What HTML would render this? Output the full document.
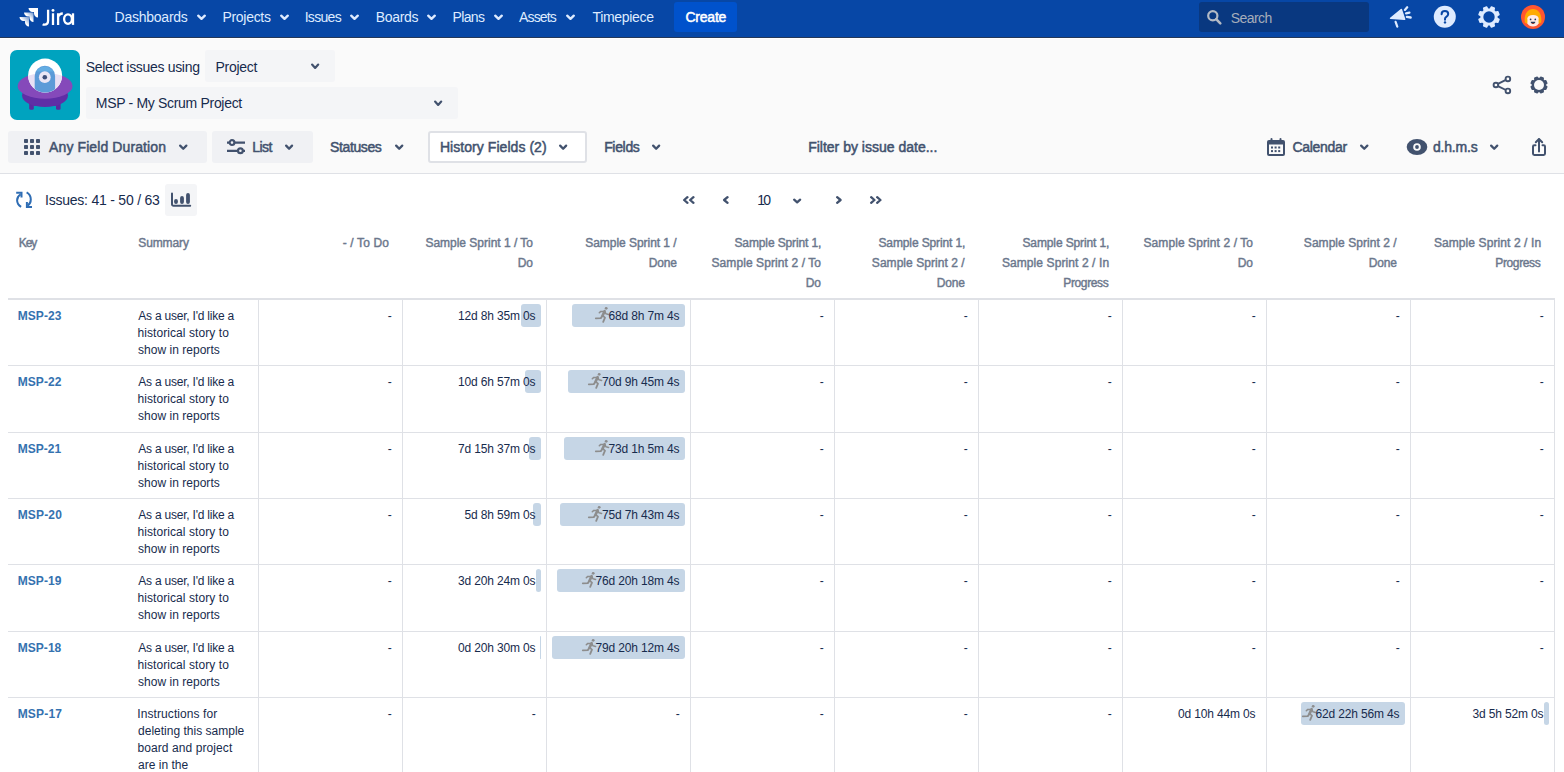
<!DOCTYPE html>
<html><head><meta charset="utf-8"><style>
*{box-sizing:border-box;margin:0;padding:0}
html,body{width:1564px;height:772px;overflow:hidden;background:#fff;font-family:"Liberation Sans", sans-serif;position:relative}
body>div,body>svg{position:absolute}
</style></head><body>
<div style="position:absolute;left:0;top:0;width:1564px;height:37px;background:#0747a6"></div>
<div style="position:absolute;left:0;top:37px;width:1564px;height:1px;background:#253858"></div>
<div style="position:absolute;left:0;top:38px;width:1564px;height:1px;background:#fff"></div>
<svg style="position:absolute;left:18px;top:7px" width="22" height="22" viewBox="0 0 22 22">
<defs><linearGradient id="jg" x1="1" y1="0" x2="0" y2="1"><stop offset="0" stop-color="#fff" stop-opacity=".4"/><stop offset=".5" stop-color="#fff"/></linearGradient></defs>
<path d="M10.5 1h9.5v9.5c-2.2 0-4-1.8-4-4V5h-1.5c-2.2 0-4-1.8-4-4z" fill="#fff"/>
<path d="M6 5.5h9.5V15c-2.2 0-4-1.8-4-4V9.5H10c-2.2 0-4-1.8-4-4z" fill="url(#jg)"/>
<path d="M1.5 10h9.5v9.5c-2.2 0-4-1.8-4-4V14H5.5c-2.2 0-4-1.8-4-4z" fill="url(#jg)"/>
</svg>
<svg style="position:absolute;left:40px;top:6px" width="38" height="22" viewBox="40 6 38 22" fill="none" stroke="#fff" stroke-width="2.3">
<path d="M48.1 9.7V20.6c0 2.7-1.6 4.1-3.6 4.1c-.7 0-1.3-.1-1.8-.4"/>
<path d="M53 13.3V24.9M58.1 13.3V24.9M58.1 17.2c.8-2.6 2.5-3.7 4.7-3.7"/>
<ellipse cx="68" cy="19.1" rx="3.9" ry="4.7"/><path d="M73 13.3V24.9"/>
<circle cx="53" cy="10.4" r="1.45" fill="#fff" stroke="none"/></svg>
<svg style="position:absolute;left:195.5px;top:12.5px" width="11" height="8.5" viewBox="-1 -1.5 11 8.5"><path d="M1.2 1.2L4.5 4.3L7.8 1.2" fill="none" stroke="#deebff" stroke-width="2.4" stroke-linecap="round" stroke-linejoin="round"/></svg>
<svg style="position:absolute;left:278.7px;top:12.5px" width="11" height="8.5" viewBox="-1 -1.5 11 8.5"><path d="M1.2 1.2L4.5 4.3L7.8 1.2" fill="none" stroke="#deebff" stroke-width="2.4" stroke-linecap="round" stroke-linejoin="round"/></svg>
<svg style="position:absolute;left:349.4px;top:12.5px" width="11" height="8.5" viewBox="-1 -1.5 11 8.5"><path d="M1.2 1.2L4.5 4.3L7.8 1.2" fill="none" stroke="#deebff" stroke-width="2.4" stroke-linecap="round" stroke-linejoin="round"/></svg>
<svg style="position:absolute;left:425.8px;top:12.5px" width="11" height="8.5" viewBox="-1 -1.5 11 8.5"><path d="M1.2 1.2L4.5 4.3L7.8 1.2" fill="none" stroke="#deebff" stroke-width="2.4" stroke-linecap="round" stroke-linejoin="round"/></svg>
<svg style="position:absolute;left:492.8px;top:12.5px" width="11" height="8.5" viewBox="-1 -1.5 11 8.5"><path d="M1.2 1.2L4.5 4.3L7.8 1.2" fill="none" stroke="#deebff" stroke-width="2.4" stroke-linecap="round" stroke-linejoin="round"/></svg>
<svg style="position:absolute;left:564.9px;top:12.5px" width="11" height="8.5" viewBox="-1 -1.5 11 8.5"><path d="M1.2 1.2L4.5 4.3L7.8 1.2" fill="none" stroke="#deebff" stroke-width="2.4" stroke-linecap="round" stroke-linejoin="round"/></svg>
<div style="position:absolute;left:674px;top:2px;width:63px;height:30px;background:#0052cc;border-radius:3px"></div>
<div style="position:absolute;left:1199px;top:2px;width:170px;height:30px;background:#093880;border-radius:3px"></div>
<svg style="position:absolute;left:1206px;top:9px" width="17" height="17" viewBox="0 0 17 17"><circle cx="6.8" cy="6.8" r="4.6" fill="none" stroke="#b3bac5" stroke-width="2.2"/><path d="M10.2 10.2L14.3 14.3" stroke="#b3bac5" stroke-width="2.6" stroke-linecap="round"/></svg>
<svg style="position:absolute;left:1385px;top:2px" width="30" height="30" viewBox="0 0 30 30">
<path d="M5.6 16.3L16.3 7.6L19.6 17.3Z" fill="#deebff" stroke="#deebff" stroke-width="1.6" stroke-linejoin="round"/>
<path d="M10.6 19.8L12.3 24.6" stroke="#deebff" stroke-width="2.2" stroke-linecap="round"/>
<path d="M19.9 7.9L22.2 5.3M21.1 11.3L24.4 10.6M21.9 14.9L25.7 15.5" stroke="#deebff" stroke-width="2.3" stroke-linecap="round"/>
</svg>
<svg style="position:absolute;left:1433px;top:5px" width="24" height="24" viewBox="0 0 24 24"><circle cx="11.8" cy="11.8" r="11" fill="#deebff"/>
<path d="M8.6 9.3c0-2 1.5-3.2 3.3-3.2s3.3 1.2 3.3 3c0 1.5-.9 2.2-1.9 2.8-.8.5-1.3 1-1.3 2v.8" fill="none" stroke="#0747a6" stroke-width="2" stroke-linecap="round"/>
<circle cx="12" cy="17.4" r="1.2" fill="#0747a6"/></svg>
<svg style="position:absolute;left:1477px;top:5px" width="24" height="24" viewBox="0 0 24 24"><path d="M19.92 13.14L22.01 14.43L20.79 17.36L18.40 16.79L16.79 18.40L17.36 20.79L14.43 22.01L13.14 19.92L10.86 19.92L9.57 22.01L6.64 20.79L7.21 18.40L5.60 16.79L3.21 17.36L1.99 14.43L4.08 13.14L4.08 10.86L1.99 9.57L3.21 6.64L5.60 7.21L7.21 5.60L6.64 3.21L9.57 1.99L10.86 4.08L13.14 4.08L14.43 1.99L17.36 3.21L16.79 5.60L18.40 7.21L20.79 6.64L22.01 9.57L19.92 10.86Z" fill="#deebff" stroke="#deebff" stroke-width="1.4" stroke-linejoin="round"/><circle cx="12" cy="12" r="5.7" fill="#0747a6"/></svg>
<svg style="position:absolute;left:1521px;top:5px" width="24" height="24" viewBox="0 0 24 24"><circle cx="12" cy="12" r="12" fill="#ff5630"/>
<path d="M3.8 17.5C2.8 9 6.5 3.9 12 3.9S21.2 9 20.2 17.5L17 19H7Z" fill="#ffab00"/>
<path d="M6.4 13.3c0-1.9 2.2-3 5.6-3.2c3.4.2 5.6 1.3 5.6 3.2V18.2c-1 2.2-3 3.3-5.6 3.3S7.4 20.4 6.4 18.2Z" fill="#ffebe6"/>
<circle cx="9.6" cy="14.4" r=".85" fill="#253858"/><circle cx="14.3" cy="14.4" r=".85" fill="#253858"/>
<path d="M9.6 16.8h4.8c-.3 1.4-1.2 2.1-2.4 2.1s-2.1-.7-2.4-2.1z" fill="#253858"/><path d="M10.6 18.2h2.8c-.4.5-.9.7-1.4.7s-1-.2-1.4-.7z" fill="#de350b"/>
</svg>
<div style="position:absolute;left:0;top:39px;width:1564px;height:134px;background:#fafafa"></div>
<div style="position:absolute;left:0;top:173px;width:1564px;height:1px;background:#dfe1e6"></div>
<svg style="position:absolute;left:10px;top:50px" width="70" height="70" viewBox="0 0 70 70">
<defs><clipPath id="ce"><ellipse cx="35.1" cy="35.9" rx="27.5" ry="12.9"/></clipPath><clipPath id="cd"><circle cx="35.1" cy="25.6" r="17"/></clipPath></defs>
<rect width="70" height="70" rx="7" fill="#00a3bf"/>
<rect x="19.2" y="48" width="4.6" height="11.8" rx="1.5" fill="#5b2aa0"/><rect x="46" y="48" width="4.6" height="11.8" rx="1.5" fill="#5b2aa0"/>
<ellipse cx="35" cy="45.5" rx="23" ry="11.5" fill="#5f2ea6"/>
<ellipse cx="35.1" cy="35.9" rx="27.5" ry="12.9" fill="#8549ba"/>
<circle cx="35.1" cy="25.6" r="17" fill="#fff"/>
<circle cx="35.1" cy="25.6" r="17" fill="#e8e0f4" clip-path="url(#ce)"/>
<g clip-path="url(#cd)">
<path d="M24.7 44V26a10.2 10.2 0 0 1 20.4 0V44z" fill="#5c9bd8"/>
</g>
<path d="M26.2 21.5a10.2 10.2 0 0 1 17.4 0z" fill="#63ade3"/>
<circle cx="34.8" cy="27.2" r="5.9" fill="#eae6f5"/><circle cx="34.8" cy="27.2" r="2.3" fill="#3d4f7a"/>
</svg>
<div style="position:absolute;left:205px;top:50px;width:130px;height:32px;background:#f4f5f7;border-radius:3px"></div>
<svg style="position:absolute;left:309.8px;top:62.3px" width="10.3" height="8.5" viewBox="-1 -1.5 10.3 8.5"><path d="M1.1 1.1L4.15 4.4L7.200000000000001 1.1" fill="none" stroke="#42526e" stroke-width="2.2" stroke-linecap="round" stroke-linejoin="round"/></svg>
<div style="position:absolute;left:86px;top:87px;width:372px;height:32px;background:#f4f5f7;border-radius:3px"></div>
<svg style="position:absolute;left:432.9px;top:99.0px" width="10.3" height="8.5" viewBox="-1 -1.5 10.3 8.5"><path d="M1.1 1.1L4.15 4.4L7.200000000000001 1.1" fill="none" stroke="#42526e" stroke-width="2.2" stroke-linecap="round" stroke-linejoin="round"/></svg>
<svg style="position:absolute;left:1490px;top:73px" width="24" height="24" viewBox="0 0 24 24" fill="none" stroke="#42526e" stroke-width="1.9">
<circle cx="5.9" cy="12" r="2.3"/><circle cx="17.9" cy="5.9" r="2.3"/><circle cx="17.9" cy="17.9" r="2.3"/>
<path d="M7.9 10.9L15.9 6.9M7.9 13.1L15.9 17"/></svg>
<svg style="position:absolute;left:1526.6px;top:72.7px" width="24" height="24" viewBox="0 0 24 24"><path d="M18.55 12.81L19.90 13.81L18.86 16.30L17.20 16.06L16.06 17.20L16.30 18.86L13.81 19.90L12.81 18.55L11.19 18.55L10.19 19.90L7.70 18.86L7.94 17.20L6.80 16.06L5.14 16.30L4.10 13.81L5.45 12.81L5.45 11.19L4.10 10.19L5.14 7.70L6.80 7.94L7.94 6.80L7.70 5.14L10.19 4.10L11.19 5.45L12.81 5.45L13.81 4.10L16.30 5.14L16.06 6.80L17.20 7.94L18.86 7.70L19.90 10.19L18.55 11.19Z" fill="#42526e" stroke="#42526e" stroke-width="1.3" stroke-linejoin="round"/><circle cx="12" cy="12" r="5.0" fill="#fafafa"/></svg>
<div style="position:absolute;left:8px;top:131px;width:199px;height:32px;background:#f0f1f4;border-radius:3px"></div>
<svg style="position:absolute;left:23px;top:138px" width="18" height="18" viewBox="0 0 18 18" fill="#42526e"><rect x="1" y="1" width="4" height="4" rx=".8"/><rect x="1" y="7" width="4" height="4" rx=".8"/><rect x="1" y="13" width="4" height="4" rx=".8"/><rect x="7" y="1" width="4" height="4" rx=".8"/><rect x="7" y="7" width="4" height="4" rx=".8"/><rect x="7" y="13" width="4" height="4" rx=".8"/><rect x="13" y="1" width="4" height="4" rx=".8"/><rect x="13" y="7" width="4" height="4" rx=".8"/><rect x="13" y="13" width="4" height="4" rx=".8"/></svg>
<svg style="position:absolute;left:177.8px;top:143.3px" width="10.5" height="8.4" viewBox="-1 -1.5 10.5 8.4"><path d="M1.15 1.15L4.25 4.25L7.35 1.15" fill="none" stroke="#42526e" stroke-width="2.3" stroke-linecap="round" stroke-linejoin="round"/></svg>
<div style="position:absolute;left:212px;top:131px;width:101px;height:32px;background:#f0f1f4;border-radius:3px"></div>
<svg style="position:absolute;left:226px;top:138px" width="20" height="18" viewBox="0 0 20 18" fill="none" stroke="#42526e" stroke-width="2.2">
<path d="M1 4.6H3.5M8.5 4.6H19M1 12.8H12M17 12.8H19"/><circle cx="6" cy="4.6" r="2.4"/><circle cx="14.4" cy="12.8" r="2.4"/></svg>
<svg style="position:absolute;left:283.9px;top:143.3px" width="10.2" height="8.4" viewBox="-1 -1.5 10.2 8.4"><path d="M1.15 1.15L4.1 4.25L7.049999999999999 1.15" fill="none" stroke="#42526e" stroke-width="2.3" stroke-linecap="round" stroke-linejoin="round"/></svg>
<svg style="position:absolute;left:393.9px;top:143.3px" width="10.4" height="8.4" viewBox="-1 -1.5 10.4 8.4"><path d="M1.15 1.15L4.2 4.25L7.25 1.15" fill="none" stroke="#42526e" stroke-width="2.3" stroke-linecap="round" stroke-linejoin="round"/></svg>
<div style="position:absolute;left:428px;top:131px;width:159px;height:32px;background:#fff;border:2px solid #dfe1e6;border-radius:3px"></div>
<svg style="position:absolute;left:557.8px;top:143.3px" width="10.3" height="8.4" viewBox="-1 -1.5 10.3 8.4"><path d="M1.15 1.15L4.15 4.25L7.15 1.15" fill="none" stroke="#42526e" stroke-width="2.3" stroke-linecap="round" stroke-linejoin="round"/></svg>
<svg style="position:absolute;left:650.9px;top:143.3px" width="10.3" height="8.4" viewBox="-1 -1.5 10.3 8.4"><path d="M1.15 1.15L4.15 4.25L7.15 1.15" fill="none" stroke="#42526e" stroke-width="2.3" stroke-linecap="round" stroke-linejoin="round"/></svg>
<svg style="position:absolute;left:1266px;top:137px" width="20" height="20" viewBox="0 0 20 20">
<rect x="1" y="3" width="18" height="16" rx="2" fill="#42526e"/><rect x="3" y="7.5" width="14" height="9.5" fill="#fafafa"/>
<rect x="4.5" y="1" width="2" height="4" rx="1" fill="#42526e"/><rect x="13.5" y="1" width="2" height="4" rx="1" fill="#42526e"/>
<rect x="5.0" y="9.5" width="2" height="2" fill="#42526e"/><rect x="5.0" y="13.1" width="2" height="2" fill="#42526e"/><rect x="8.6" y="9.5" width="2" height="2" fill="#42526e"/><rect x="8.6" y="13.1" width="2" height="2" fill="#42526e"/><rect x="12.2" y="9.5" width="2" height="2" fill="#42526e"/><rect x="12.2" y="13.1" width="2" height="2" fill="#42526e"/></svg>
<svg style="position:absolute;left:1359px;top:143.3px" width="10.5" height="8.4" viewBox="-1 -1.5 10.5 8.4"><path d="M1.15 1.15L4.25 4.25L7.35 1.15" fill="none" stroke="#42526e" stroke-width="2.3" stroke-linecap="round" stroke-linejoin="round"/></svg>
<svg style="position:absolute;left:1406px;top:138px" width="22" height="18" viewBox="0 0 22 18">
<ellipse cx="11" cy="9" rx="10.3" ry="8" fill="#42526e"/><circle cx="11" cy="9" r="3.8" fill="#fafafa"/><circle cx="11" cy="9" r="1.9" fill="#42526e"/></svg>
<svg style="position:absolute;left:1489px;top:143.3px" width="10.4" height="8.4" viewBox="-1 -1.5 10.4 8.4"><path d="M1.15 1.15L4.2 4.25L7.25 1.15" fill="none" stroke="#42526e" stroke-width="2.3" stroke-linecap="round" stroke-linejoin="round"/></svg>
<svg style="position:absolute;left:1530px;top:136px" width="18" height="22" viewBox="0 0 18 22" fill="none" stroke="#42526e" stroke-width="2" stroke-linejoin="round" stroke-linecap="round">
<path d="M5.5 9.2H4.3Q3 9.2 3 10.5V17.6Q3 18.9 4.3 18.9H13.7Q15 18.9 15 17.6V10.5Q15 9.2 13.7 9.2H12.5"/><path d="M9 15.6V3M5.8 6.3L9 3L12.2 6.3"/></svg>
<svg style="position:absolute;left:10px;top:185px" width="30" height="30" viewBox="10 185 30 30" fill="none" stroke="#2f6db4" stroke-width="2">
<path d="M20.6 194.2C18.3 195.8 17.1 197.9 17.1 200.2C17.1 203 18.6 205.2 21.1 206.8"/><path d="M16.2 192.7H21.5V197.5" stroke-linejoin="miter"/>
<path d="M26.6 192.4C29.3 193.8 30.8 196.6 30.8 199.6C30.8 202.2 29.6 204.3 27.8 205.6"/><path d="M26.9 202.1V207.1H32" stroke-linejoin="miter"/></svg>
<div style="position:absolute;left:165px;top:184px;width:32px;height:32px;background:#f4f5f7;border-radius:3px"></div>
<svg style="position:absolute;left:168px;top:190px" width="26" height="20" viewBox="0 0 26 20" fill="none" stroke="#42526e">
<path d="M4 3.5V14.2a1.5 1.5 0 0 0 1.5 1.5H22.2" stroke-width="2" stroke-linecap="round"/>
<path d="M8 10.9V12M14 8V12M20 5V12" stroke-width="3.8" stroke-linecap="round"/></svg>
<svg style="position:absolute;left:681.7px;top:195px" width="7.6" height="10" viewBox="-1 -1 7.6 10"><path d="M4.449999999999999 1.15L1.15 4.0L4.449999999999999 6.85" fill="none" stroke="#42526e" stroke-width="2.3" stroke-linecap="round" stroke-linejoin="round"/></svg>
<svg style="position:absolute;left:687.6px;top:195px" width="7.6" height="10" viewBox="-1 -1 7.6 10"><path d="M4.449999999999999 1.15L1.15 4.0L4.449999999999999 6.85" fill="none" stroke="#42526e" stroke-width="2.3" stroke-linecap="round" stroke-linejoin="round"/></svg>
<svg style="position:absolute;left:721.7px;top:195px" width="7.7" height="10" viewBox="-1 -1 7.7 10"><path d="M4.550000000000001 1.15L1.15 4.0L4.550000000000001 6.85" fill="none" stroke="#42526e" stroke-width="2.3" stroke-linecap="round" stroke-linejoin="round"/></svg>
<svg style="position:absolute;left:791.8px;top:196.5px" width="10.3" height="8" viewBox="-1 -1.5 10.3 8"><path d="M1.15 1.15L4.15 3.85L7.15 1.15" fill="none" stroke="#42526e" stroke-width="2.3" stroke-linecap="round" stroke-linejoin="round"/></svg>
<svg style="position:absolute;left:834.7px;top:195px" width="7.7" height="10" viewBox="-1 -1 7.7 10"><path d="M1.15 1.15L4.550000000000001 4.0L1.15 6.85" fill="none" stroke="#42526e" stroke-width="2.3" stroke-linecap="round" stroke-linejoin="round"/></svg>
<svg style="position:absolute;left:868.7px;top:195px" width="7.6" height="10" viewBox="-1 -1 7.6 10"><path d="M1.15 1.15L4.449999999999999 4.0L1.15 6.85" fill="none" stroke="#42526e" stroke-width="2.3" stroke-linecap="round" stroke-linejoin="round"/></svg>
<svg style="position:absolute;left:874.7px;top:195px" width="7.6" height="10" viewBox="-1 -1 7.6 10"><path d="M1.15 1.15L4.449999999999999 4.0L1.15 6.85" fill="none" stroke="#42526e" stroke-width="2.3" stroke-linecap="round" stroke-linejoin="round"/></svg>
<div style="position:absolute;left:8px;top:298px;width:1547px;height:2px;background:#dfe1e6"></div>
<div style="position:absolute;left:8px;top:365.000px;width:1547px;height:1px;background:#dfe1e6"></div>
<div style="position:absolute;left:8px;top:432.000px;width:1547px;height:1px;background:#dfe1e6"></div>
<div style="position:absolute;left:8px;top:498.000px;width:1547px;height:1px;background:#dfe1e6"></div>
<div style="position:absolute;left:8px;top:564.000px;width:1547px;height:1px;background:#dfe1e6"></div>
<div style="position:absolute;left:8px;top:631.000px;width:1547px;height:1px;background:#dfe1e6"></div>
<div style="position:absolute;left:8px;top:697.000px;width:1547px;height:1px;background:#dfe1e6"></div>
<div style="position:absolute;left:258px;top:300px;width:1px;height:472px;background:#dfe1e6"></div>
<div style="position:absolute;left:402px;top:300px;width:1px;height:472px;background:#dfe1e6"></div>
<div style="position:absolute;left:546px;top:300px;width:1px;height:472px;background:#dfe1e6"></div>
<div style="position:absolute;left:690px;top:300px;width:1px;height:472px;background:#dfe1e6"></div>
<div style="position:absolute;left:834px;top:300px;width:1px;height:472px;background:#dfe1e6"></div>
<div style="position:absolute;left:978px;top:300px;width:1px;height:472px;background:#dfe1e6"></div>
<div style="position:absolute;left:1122px;top:300px;width:1px;height:472px;background:#dfe1e6"></div>
<div style="position:absolute;left:1266px;top:300px;width:1px;height:472px;background:#dfe1e6"></div>
<div style="position:absolute;left:1410px;top:300px;width:1px;height:472px;background:#dfe1e6"></div>
<div style="position:absolute;left:1554px;top:300px;width:1px;height:472px;background:#dfe1e6"></div>
<div style="position:absolute;left:521.00px;top:304.10px;width:19.60px;height:22.5px;background:#c6d6e6;border-radius:3px"></div>
<div style="position:absolute;left:572.20px;top:304.10px;width:112.40px;height:22.5px;background:#c6d6e6;border-radius:3px"></div>
<div style="position:absolute;left:525.10px;top:370.10px;width:15.50px;height:22.5px;background:#c6d6e6;border-radius:3px"></div>
<div style="position:absolute;left:568.00px;top:370.10px;width:116.60px;height:22.5px;background:#c6d6e6;border-radius:3px"></div>
<div style="position:absolute;left:529.30px;top:437.10px;width:11.30px;height:22.5px;background:#c6d6e6;border-radius:3px"></div>
<div style="position:absolute;left:564.20px;top:437.10px;width:120.40px;height:22.5px;background:#c6d6e6;border-radius:3px"></div>
<div style="position:absolute;left:533.10px;top:503.10px;width:7.50px;height:22.5px;background:#c6d6e6;border-radius:3px"></div>
<div style="position:absolute;left:560.00px;top:503.10px;width:124.60px;height:22.5px;background:#c6d6e6;border-radius:3px"></div>
<div style="position:absolute;left:536.10px;top:569.10px;width:4.50px;height:22.5px;background:#c6d6e6;border-radius:3px"></div>
<div style="position:absolute;left:557.20px;top:569.10px;width:127.40px;height:22.5px;background:#c6d6e6;border-radius:3px"></div>
<div style="position:absolute;left:539.70px;top:636.10px;width:0.90px;height:22.5px;background:#c6d6e6;border-radius:3px"></div>
<div style="position:absolute;left:551.90px;top:636.10px;width:132.70px;height:22.5px;background:#c6d6e6;border-radius:3px"></div>
<div style="position:absolute;left:1301.00px;top:702.10px;width:103.60px;height:22.5px;background:#c6d6e6;border-radius:3px"></div>
<div style="position:absolute;left:1544.00px;top:702.10px;width:4.60px;height:22.5px;background:#c6d6e6;border-radius:3px"></div>
<svg style="position:absolute;left:593.60px;top:306.00px" width="16" height="17" viewBox="0 0 16 17" fill="none" stroke="#8d8d8d" stroke-linecap="round" stroke-linejoin="round">
<circle cx="12.2" cy="2.3" r="1.4" fill="#8d8d8d" stroke="none"/>
<path d="M10.6 5.2L8.6 9.6" stroke-width="2.6"/>
<path d="M10.6 5.2L6.8 5.4L5.3 6.8M10.6 5.2L12 7.8L14.6 8.4" stroke-width="1.5"/>
<path d="M8.6 9.6L6.8 12.1L1.8 12.3M8.6 9.6L11 11.6L9.2 15.8" stroke-width="1.8"/></svg>
<svg style="position:absolute;left:587.09px;top:372.00px" width="16" height="17" viewBox="0 0 16 17" fill="none" stroke="#8d8d8d" stroke-linecap="round" stroke-linejoin="round">
<circle cx="12.2" cy="2.3" r="1.4" fill="#8d8d8d" stroke="none"/>
<path d="M10.6 5.2L8.6 9.6" stroke-width="2.6"/>
<path d="M10.6 5.2L6.8 5.4L5.3 6.8M10.6 5.2L12 7.8L14.6 8.4" stroke-width="1.5"/>
<path d="M8.6 9.6L6.8 12.1L1.8 12.3M8.6 9.6L11 11.6L9.2 15.8" stroke-width="1.8"/></svg>
<svg style="position:absolute;left:593.60px;top:439.00px" width="16" height="17" viewBox="0 0 16 17" fill="none" stroke="#8d8d8d" stroke-linecap="round" stroke-linejoin="round">
<circle cx="12.2" cy="2.3" r="1.4" fill="#8d8d8d" stroke="none"/>
<path d="M10.6 5.2L8.6 9.6" stroke-width="2.6"/>
<path d="M10.6 5.2L6.8 5.4L5.3 6.8M10.6 5.2L12 7.8L14.6 8.4" stroke-width="1.5"/>
<path d="M8.6 9.6L6.8 12.1L1.8 12.3M8.6 9.6L11 11.6L9.2 15.8" stroke-width="1.8"/></svg>
<svg style="position:absolute;left:587.09px;top:505.00px" width="16" height="17" viewBox="0 0 16 17" fill="none" stroke="#8d8d8d" stroke-linecap="round" stroke-linejoin="round">
<circle cx="12.2" cy="2.3" r="1.4" fill="#8d8d8d" stroke="none"/>
<path d="M10.6 5.2L8.6 9.6" stroke-width="2.6"/>
<path d="M10.6 5.2L6.8 5.4L5.3 6.8M10.6 5.2L12 7.8L14.6 8.4" stroke-width="1.5"/>
<path d="M8.6 9.6L6.8 12.1L1.8 12.3M8.6 9.6L11 11.6L9.2 15.8" stroke-width="1.8"/></svg>
<svg style="position:absolute;left:580.59px;top:571.00px" width="16" height="17" viewBox="0 0 16 17" fill="none" stroke="#8d8d8d" stroke-linecap="round" stroke-linejoin="round">
<circle cx="12.2" cy="2.3" r="1.4" fill="#8d8d8d" stroke="none"/>
<path d="M10.6 5.2L8.6 9.6" stroke-width="2.6"/>
<path d="M10.6 5.2L6.8 5.4L5.3 6.8M10.6 5.2L12 7.8L14.6 8.4" stroke-width="1.5"/>
<path d="M8.6 9.6L6.8 12.1L1.8 12.3M8.6 9.6L11 11.6L9.2 15.8" stroke-width="1.8"/></svg>
<svg style="position:absolute;left:580.59px;top:638.00px" width="16" height="17" viewBox="0 0 16 17" fill="none" stroke="#8d8d8d" stroke-linecap="round" stroke-linejoin="round">
<circle cx="12.2" cy="2.3" r="1.4" fill="#8d8d8d" stroke="none"/>
<path d="M10.6 5.2L8.6 9.6" stroke-width="2.6"/>
<path d="M10.6 5.2L6.8 5.4L5.3 6.8M10.6 5.2L12 7.8L14.6 8.4" stroke-width="1.5"/>
<path d="M8.6 9.6L6.8 12.1L1.8 12.3M8.6 9.6L11 11.6L9.2 15.8" stroke-width="1.8"/></svg>
<svg style="position:absolute;left:1300.59px;top:704.00px" width="16" height="17" viewBox="0 0 16 17" fill="none" stroke="#8d8d8d" stroke-linecap="round" stroke-linejoin="round">
<circle cx="12.2" cy="2.3" r="1.4" fill="#8d8d8d" stroke="none"/>
<path d="M10.6 5.2L8.6 9.6" stroke-width="2.6"/>
<path d="M10.6 5.2L6.8 5.4L5.3 6.8M10.6 5.2L12 7.8L14.6 8.4" stroke-width="1.5"/>
<path d="M8.6 9.6L6.8 12.1L1.8 12.3M8.6 9.6L11 11.6L9.2 15.8" stroke-width="1.8"/></svg>
<div id="t0" style="position:absolute;top:10.15px;font-size:14px;line-height:14px;font-weight:400;white-space:pre;letter-spacing:-0.251px;left:114.60px;color:#deebff">Dashboards</div>
<div id="t1" style="position:absolute;top:10.15px;font-size:14px;line-height:14px;font-weight:400;white-space:pre;letter-spacing:-0.286px;left:222.41px;color:#deebff">Projects</div>
<div id="t2" style="position:absolute;top:10.15px;font-size:14px;line-height:14px;font-weight:400;white-space:pre;letter-spacing:-0.673px;left:304.63px;color:#deebff">Issues</div>
<div id="t3" style="position:absolute;top:10.15px;font-size:14px;line-height:14px;font-weight:400;white-space:pre;letter-spacing:-0.320px;left:375.72px;color:#deebff">Boards</div>
<div id="t4" style="position:absolute;top:10.15px;font-size:14px;line-height:14px;font-weight:400;white-space:pre;letter-spacing:-0.675px;left:452.57px;color:#deebff">Plans</div>
<div id="t5" style="position:absolute;top:10.15px;font-size:14px;line-height:14px;font-weight:400;white-space:pre;letter-spacing:-0.855px;left:519.07px;color:#deebff">Assets</div>
<div id="t6" style="position:absolute;top:10.15px;font-size:14px;line-height:14px;font-weight:400;white-space:pre;letter-spacing:-0.328px;left:592.51px;color:#deebff">Timepiece</div>
<div id="t7" style="position:absolute;top:10.15px;font-size:14px;line-height:14px;font-weight:400;-webkit-text-stroke:0.5px currentColor;white-space:pre;letter-spacing:-0.216px;left:685.41px;color:#fff">Create</div>
<div id="t8" style="position:absolute;top:11.15px;font-size:14px;line-height:14px;font-weight:400;white-space:pre;letter-spacing:-0.548px;left:1230.63px;color:#a5adba">Search</div>
<div id="t9" style="position:absolute;top:59.65px;font-size:14px;line-height:14px;font-weight:400;white-space:pre;letter-spacing:-0.316px;left:85.78px;color:#172b4d">Select issues using</div>
<div id="t10" style="position:absolute;top:59.65px;font-size:14px;line-height:14px;font-weight:400;white-space:pre;letter-spacing:-0.280px;left:215.57px;color:#172b4d">Project</div>
<div id="t11" style="position:absolute;top:95.65px;font-size:14px;line-height:14px;font-weight:400;white-space:pre;letter-spacing:-0.313px;left:95.81px;color:#172b4d">MSP - My Scrum Project</div>
<div id="t12" style="position:absolute;top:140.25px;font-size:14px;line-height:14px;font-weight:400;-webkit-text-stroke:0.5px currentColor;white-space:pre;letter-spacing:0.099px;left:49.08px;color:#42526e">Any Field Duration</div>
<div id="t13" style="position:absolute;top:140.25px;font-size:14px;line-height:14px;font-weight:400;-webkit-text-stroke:0.5px currentColor;white-space:pre;letter-spacing:-0.521px;left:252.13px;color:#42526e">List</div>
<div id="t14" style="position:absolute;top:140.25px;font-size:14px;line-height:14px;font-weight:400;-webkit-text-stroke:0.5px currentColor;white-space:pre;letter-spacing:-0.374px;left:330.01px;color:#42526e">Statuses</div>
<div id="t15" style="position:absolute;top:140.25px;font-size:14px;line-height:14px;font-weight:400;-webkit-text-stroke:0.5px currentColor;white-space:pre;letter-spacing:0.053px;left:439.92px;color:#42526e">History Fields (2)</div>
<div id="t16" style="position:absolute;top:140.25px;font-size:14px;line-height:14px;font-weight:400;-webkit-text-stroke:0.5px currentColor;white-space:pre;letter-spacing:-0.327px;left:604.14px;color:#42526e">Fields</div>
<div id="t17" style="position:absolute;top:140.25px;font-size:14px;line-height:14px;font-weight:400;-webkit-text-stroke:0.5px currentColor;white-space:pre;letter-spacing:0.004px;left:808.14px;color:#42526e">Filter by issue date...</div>
<div id="t18" style="position:absolute;top:140.25px;font-size:14px;line-height:14px;font-weight:400;-webkit-text-stroke:0.5px currentColor;white-space:pre;letter-spacing:-0.288px;left:1292.40px;color:#42526e">Calendar</div>
<div id="t19" style="position:absolute;top:140.25px;font-size:14px;line-height:14px;font-weight:400;-webkit-text-stroke:0.5px currentColor;white-space:pre;letter-spacing:-0.168px;left:1432.92px;color:#42526e">d.h.m.s</div>
<div id="t20" style="position:absolute;top:193.05px;font-size:14px;line-height:14px;font-weight:400;white-space:pre;letter-spacing:-0.224px;left:45.00px;color:#172b4d">Issues: 41 - 50 / 63</div>
<div id="t21" style="position:absolute;top:193.15px;font-size:14px;line-height:14px;font-weight:400;white-space:pre;letter-spacing:-1.830px;left:757.27px;color:#172b4d">10</div>
<div id="t22" style="position:absolute;top:237.04px;font-size:12px;line-height:12px;font-weight:400;-webkit-text-stroke:0.42px currentColor;white-space:pre;letter-spacing:-1.088px;left:18.74px;color:#6b778c">Key</div>
<div id="t23" style="position:absolute;top:237.04px;font-size:12px;line-height:12px;font-weight:400;-webkit-text-stroke:0.42px currentColor;white-space:pre;letter-spacing:-0.096px;left:138.24px;color:#6b778c">Summary</div>
<div id="t24" style="position:absolute;top:237.04px;font-size:12px;line-height:12px;font-weight:400;-webkit-text-stroke:0.42px currentColor;white-space:pre;letter-spacing:0.160px;right:1174.80px;color:#6b778c">- / To Do</div>
<div id="t25" style="position:absolute;top:237.04px;font-size:12px;line-height:12px;font-weight:400;-webkit-text-stroke:0.42px currentColor;white-space:pre;letter-spacing:-0.011px;right:1030.97px;color:#6b778c">Sample Sprint 1 / To</div>
<div id="t26" style="position:absolute;top:257.04px;font-size:12px;line-height:12px;font-weight:400;-webkit-text-stroke:0.42px currentColor;white-space:pre;letter-spacing:-0.159px;right:1031.12px;color:#6b778c">Do</div>
<div id="t27" style="position:absolute;top:237.04px;font-size:12px;line-height:12px;font-weight:400;-webkit-text-stroke:0.42px currentColor;white-space:pre;letter-spacing:-0.046px;right:887.46px;color:#6b778c">Sample Sprint 1 /</div>
<div id="t28" style="position:absolute;top:257.04px;font-size:12px;line-height:12px;font-weight:400;-webkit-text-stroke:0.42px currentColor;white-space:pre;letter-spacing:-0.117px;right:887.09px;color:#6b778c">Done</div>
<div id="t29" style="position:absolute;top:237.04px;font-size:12px;line-height:12px;font-weight:400;-webkit-text-stroke:0.42px currentColor;white-space:pre;letter-spacing:-0.114px;right:742.68px;color:#6b778c">Sample Sprint 1,</div>
<div id="t30" style="position:absolute;top:257.04px;font-size:12px;line-height:12px;font-weight:400;-webkit-text-stroke:0.42px currentColor;white-space:pre;letter-spacing:0.093px;right:742.87px;color:#6b778c">Sample Sprint 2 / To</div>
<div id="t31" style="position:absolute;top:277.04px;font-size:12px;line-height:12px;font-weight:400;-webkit-text-stroke:0.42px currentColor;white-space:pre;letter-spacing:-0.159px;right:743.12px;color:#6b778c">Do</div>
<div id="t32" style="position:absolute;top:237.04px;font-size:12px;line-height:12px;font-weight:400;-webkit-text-stroke:0.42px currentColor;white-space:pre;letter-spacing:-0.114px;right:598.68px;color:#6b778c">Sample Sprint 1,</div>
<div id="t33" style="position:absolute;top:257.04px;font-size:12px;line-height:12px;font-weight:400;-webkit-text-stroke:0.42px currentColor;white-space:pre;letter-spacing:0.044px;right:599.37px;color:#6b778c">Sample Sprint 2 /</div>
<div id="t34" style="position:absolute;top:277.04px;font-size:12px;line-height:12px;font-weight:400;-webkit-text-stroke:0.42px currentColor;white-space:pre;letter-spacing:-0.117px;right:599.09px;color:#6b778c">Done</div>
<div id="t35" style="position:absolute;top:237.04px;font-size:12px;line-height:12px;font-weight:400;-webkit-text-stroke:0.42px currentColor;white-space:pre;letter-spacing:-0.114px;right:454.68px;color:#6b778c">Sample Sprint 1,</div>
<div id="t36" style="position:absolute;top:257.04px;font-size:12px;line-height:12px;font-weight:400;-webkit-text-stroke:0.42px currentColor;white-space:pre;letter-spacing:0.094px;right:454.84px;color:#6b778c">Sample Sprint 2 / In</div>
<div id="t37" style="position:absolute;top:277.04px;font-size:12px;line-height:12px;font-weight:400;-webkit-text-stroke:0.42px currentColor;white-space:pre;letter-spacing:-0.371px;right:455.64px;color:#6b778c">Progress</div>
<div id="t38" style="position:absolute;top:237.04px;font-size:12px;line-height:12px;font-weight:400;-webkit-text-stroke:0.42px currentColor;white-space:pre;letter-spacing:0.093px;right:310.87px;color:#6b778c">Sample Sprint 2 / To</div>
<div id="t39" style="position:absolute;top:257.04px;font-size:12px;line-height:12px;font-weight:400;-webkit-text-stroke:0.42px currentColor;white-space:pre;letter-spacing:-0.159px;right:311.12px;color:#6b778c">Do</div>
<div id="t40" style="position:absolute;top:237.04px;font-size:12px;line-height:12px;font-weight:400;-webkit-text-stroke:0.42px currentColor;white-space:pre;letter-spacing:0.044px;right:167.37px;color:#6b778c">Sample Sprint 2 /</div>
<div id="t41" style="position:absolute;top:257.04px;font-size:12px;line-height:12px;font-weight:400;-webkit-text-stroke:0.42px currentColor;white-space:pre;letter-spacing:-0.117px;right:167.09px;color:#6b778c">Done</div>
<div id="t42" style="position:absolute;top:237.04px;font-size:12px;line-height:12px;font-weight:400;-webkit-text-stroke:0.42px currentColor;white-space:pre;letter-spacing:0.094px;right:22.84px;color:#6b778c">Sample Sprint 2 / In</div>
<div id="t43" style="position:absolute;top:257.04px;font-size:12px;line-height:12px;font-weight:400;-webkit-text-stroke:0.42px currentColor;white-space:pre;letter-spacing:-0.371px;right:23.64px;color:#6b778c">Progress</div>
<div id="t44" style="position:absolute;top:309.84px;font-size:12px;line-height:12px;font-weight:700;white-space:pre;letter-spacing:0.061px;left:17.71px;color:#3572b0">MSP-23</div>
<div id="t45" style="position:absolute;top:309.84px;font-size:12px;line-height:12px;font-weight:400;white-space:pre;letter-spacing:-0.214px;left:138.21px;color:#172b4d">As a user, I'd like a</div>
<div id="t46" style="position:absolute;top:326.98px;font-size:12px;line-height:12px;font-weight:400;white-space:pre;letter-spacing:0.075px;left:137.51px;color:#172b4d">historical story to</div>
<div id="t47" style="position:absolute;top:344.12px;font-size:12px;line-height:12px;font-weight:400;white-space:pre;letter-spacing:0.024px;left:138.06px;color:#172b4d">show in reports</div>
<div id="t48" style="position:absolute;top:309.84px;font-size:12px;line-height:12px;font-weight:400;white-space:pre;letter-spacing:0.000px;right:1172.22px;color:#172b4d">-</div>
<div id="t49" style="position:absolute;top:309.84px;font-size:12px;line-height:12px;font-weight:400;white-space:pre;letter-spacing:-0.153px;right:1028.60px;color:#172b4d">12d 8h 35m 0s</div>
<div id="t50" style="position:absolute;top:309.84px;font-size:12px;line-height:12px;font-weight:400;white-space:pre;letter-spacing:-0.151px;right:884.60px;color:#172b4d">68d 8h 7m 4s</div>
<div id="t51" style="position:absolute;top:309.84px;font-size:12px;line-height:12px;font-weight:400;white-space:pre;letter-spacing:0.000px;right:740.22px;color:#172b4d">-</div>
<div id="t52" style="position:absolute;top:309.84px;font-size:12px;line-height:12px;font-weight:400;white-space:pre;letter-spacing:0.000px;right:596.22px;color:#172b4d">-</div>
<div id="t53" style="position:absolute;top:309.84px;font-size:12px;line-height:12px;font-weight:400;white-space:pre;letter-spacing:0.000px;right:452.22px;color:#172b4d">-</div>
<div id="t54" style="position:absolute;top:309.84px;font-size:12px;line-height:12px;font-weight:400;white-space:pre;letter-spacing:0.000px;right:308.22px;color:#172b4d">-</div>
<div id="t55" style="position:absolute;top:309.84px;font-size:12px;line-height:12px;font-weight:400;white-space:pre;letter-spacing:0.000px;right:164.22px;color:#172b4d">-</div>
<div id="t56" style="position:absolute;top:309.84px;font-size:12px;line-height:12px;font-weight:400;white-space:pre;letter-spacing:0.000px;right:20.22px;color:#172b4d">-</div>
<div id="t57" style="position:absolute;top:375.84px;font-size:12px;line-height:12px;font-weight:700;white-space:pre;letter-spacing:0.061px;left:17.71px;color:#3572b0">MSP-22</div>
<div id="t58" style="position:absolute;top:375.84px;font-size:12px;line-height:12px;font-weight:400;white-space:pre;letter-spacing:-0.214px;left:138.21px;color:#172b4d">As a user, I'd like a</div>
<div id="t59" style="position:absolute;top:392.98px;font-size:12px;line-height:12px;font-weight:400;white-space:pre;letter-spacing:0.075px;left:137.51px;color:#172b4d">historical story to</div>
<div id="t60" style="position:absolute;top:410.12px;font-size:12px;line-height:12px;font-weight:400;white-space:pre;letter-spacing:0.024px;left:138.06px;color:#172b4d">show in reports</div>
<div id="t61" style="position:absolute;top:375.84px;font-size:12px;line-height:12px;font-weight:400;white-space:pre;letter-spacing:0.000px;right:1172.22px;color:#172b4d">-</div>
<div id="t62" style="position:absolute;top:375.84px;font-size:12px;line-height:12px;font-weight:400;white-space:pre;letter-spacing:-0.153px;right:1028.60px;color:#172b4d">10d 6h 57m 0s</div>
<div id="t63" style="position:absolute;top:375.84px;font-size:12px;line-height:12px;font-weight:400;white-space:pre;letter-spacing:-0.153px;right:884.60px;color:#172b4d">70d 9h 45m 4s</div>
<div id="t64" style="position:absolute;top:375.84px;font-size:12px;line-height:12px;font-weight:400;white-space:pre;letter-spacing:0.000px;right:740.22px;color:#172b4d">-</div>
<div id="t65" style="position:absolute;top:375.84px;font-size:12px;line-height:12px;font-weight:400;white-space:pre;letter-spacing:0.000px;right:596.22px;color:#172b4d">-</div>
<div id="t66" style="position:absolute;top:375.84px;font-size:12px;line-height:12px;font-weight:400;white-space:pre;letter-spacing:0.000px;right:452.22px;color:#172b4d">-</div>
<div id="t67" style="position:absolute;top:375.84px;font-size:12px;line-height:12px;font-weight:400;white-space:pre;letter-spacing:0.000px;right:308.22px;color:#172b4d">-</div>
<div id="t68" style="position:absolute;top:375.84px;font-size:12px;line-height:12px;font-weight:400;white-space:pre;letter-spacing:0.000px;right:164.22px;color:#172b4d">-</div>
<div id="t69" style="position:absolute;top:375.84px;font-size:12px;line-height:12px;font-weight:400;white-space:pre;letter-spacing:0.000px;right:20.22px;color:#172b4d">-</div>
<div id="t70" style="position:absolute;top:442.84px;font-size:12px;line-height:12px;font-weight:700;white-space:pre;letter-spacing:0.025px;left:17.71px;color:#3572b0">MSP-21</div>
<div id="t71" style="position:absolute;top:442.84px;font-size:12px;line-height:12px;font-weight:400;white-space:pre;letter-spacing:-0.214px;left:138.21px;color:#172b4d">As a user, I'd like a</div>
<div id="t72" style="position:absolute;top:459.98px;font-size:12px;line-height:12px;font-weight:400;white-space:pre;letter-spacing:0.075px;left:137.51px;color:#172b4d">historical story to</div>
<div id="t73" style="position:absolute;top:477.12px;font-size:12px;line-height:12px;font-weight:400;white-space:pre;letter-spacing:0.024px;left:138.06px;color:#172b4d">show in reports</div>
<div id="t74" style="position:absolute;top:442.84px;font-size:12px;line-height:12px;font-weight:400;white-space:pre;letter-spacing:0.000px;right:1172.22px;color:#172b4d">-</div>
<div id="t75" style="position:absolute;top:442.84px;font-size:12px;line-height:12px;font-weight:400;white-space:pre;letter-spacing:-0.153px;right:1028.60px;color:#172b4d">7d 15h 37m 0s</div>
<div id="t76" style="position:absolute;top:442.84px;font-size:12px;line-height:12px;font-weight:400;white-space:pre;letter-spacing:-0.151px;right:884.60px;color:#172b4d">73d 1h 5m 4s</div>
<div id="t77" style="position:absolute;top:442.84px;font-size:12px;line-height:12px;font-weight:400;white-space:pre;letter-spacing:0.000px;right:740.22px;color:#172b4d">-</div>
<div id="t78" style="position:absolute;top:442.84px;font-size:12px;line-height:12px;font-weight:400;white-space:pre;letter-spacing:0.000px;right:596.22px;color:#172b4d">-</div>
<div id="t79" style="position:absolute;top:442.84px;font-size:12px;line-height:12px;font-weight:400;white-space:pre;letter-spacing:0.000px;right:452.22px;color:#172b4d">-</div>
<div id="t80" style="position:absolute;top:442.84px;font-size:12px;line-height:12px;font-weight:400;white-space:pre;letter-spacing:0.000px;right:308.22px;color:#172b4d">-</div>
<div id="t81" style="position:absolute;top:442.84px;font-size:12px;line-height:12px;font-weight:400;white-space:pre;letter-spacing:0.000px;right:164.22px;color:#172b4d">-</div>
<div id="t82" style="position:absolute;top:442.84px;font-size:12px;line-height:12px;font-weight:400;white-space:pre;letter-spacing:0.000px;right:20.22px;color:#172b4d">-</div>
<div id="t83" style="position:absolute;top:508.84px;font-size:12px;line-height:12px;font-weight:700;white-space:pre;letter-spacing:0.155px;left:17.71px;color:#3572b0">MSP-20</div>
<div id="t84" style="position:absolute;top:508.84px;font-size:12px;line-height:12px;font-weight:400;white-space:pre;letter-spacing:-0.214px;left:138.21px;color:#172b4d">As a user, I'd like a</div>
<div id="t85" style="position:absolute;top:525.98px;font-size:12px;line-height:12px;font-weight:400;white-space:pre;letter-spacing:0.075px;left:137.51px;color:#172b4d">historical story to</div>
<div id="t86" style="position:absolute;top:543.12px;font-size:12px;line-height:12px;font-weight:400;white-space:pre;letter-spacing:0.024px;left:138.06px;color:#172b4d">show in reports</div>
<div id="t87" style="position:absolute;top:508.84px;font-size:12px;line-height:12px;font-weight:400;white-space:pre;letter-spacing:0.000px;right:1172.22px;color:#172b4d">-</div>
<div id="t88" style="position:absolute;top:508.84px;font-size:12px;line-height:12px;font-weight:400;white-space:pre;letter-spacing:-0.151px;right:1028.60px;color:#172b4d">5d 8h 59m 0s</div>
<div id="t89" style="position:absolute;top:508.84px;font-size:12px;line-height:12px;font-weight:400;white-space:pre;letter-spacing:-0.153px;right:884.60px;color:#172b4d">75d 7h 43m 4s</div>
<div id="t90" style="position:absolute;top:508.84px;font-size:12px;line-height:12px;font-weight:400;white-space:pre;letter-spacing:0.000px;right:740.22px;color:#172b4d">-</div>
<div id="t91" style="position:absolute;top:508.84px;font-size:12px;line-height:12px;font-weight:400;white-space:pre;letter-spacing:0.000px;right:596.22px;color:#172b4d">-</div>
<div id="t92" style="position:absolute;top:508.84px;font-size:12px;line-height:12px;font-weight:400;white-space:pre;letter-spacing:0.000px;right:452.22px;color:#172b4d">-</div>
<div id="t93" style="position:absolute;top:508.84px;font-size:12px;line-height:12px;font-weight:400;white-space:pre;letter-spacing:0.000px;right:308.22px;color:#172b4d">-</div>
<div id="t94" style="position:absolute;top:508.84px;font-size:12px;line-height:12px;font-weight:400;white-space:pre;letter-spacing:0.000px;right:164.22px;color:#172b4d">-</div>
<div id="t95" style="position:absolute;top:508.84px;font-size:12px;line-height:12px;font-weight:400;white-space:pre;letter-spacing:0.000px;right:20.22px;color:#172b4d">-</div>
<div id="t96" style="position:absolute;top:574.84px;font-size:12px;line-height:12px;font-weight:700;white-space:pre;letter-spacing:0.057px;left:17.71px;color:#3572b0">MSP-19</div>
<div id="t97" style="position:absolute;top:574.84px;font-size:12px;line-height:12px;font-weight:400;white-space:pre;letter-spacing:-0.214px;left:138.21px;color:#172b4d">As a user, I'd like a</div>
<div id="t98" style="position:absolute;top:591.98px;font-size:12px;line-height:12px;font-weight:400;white-space:pre;letter-spacing:0.075px;left:137.51px;color:#172b4d">historical story to</div>
<div id="t99" style="position:absolute;top:609.12px;font-size:12px;line-height:12px;font-weight:400;white-space:pre;letter-spacing:0.024px;left:138.06px;color:#172b4d">show in reports</div>
<div id="t100" style="position:absolute;top:574.84px;font-size:12px;line-height:12px;font-weight:400;white-space:pre;letter-spacing:0.000px;right:1172.22px;color:#172b4d">-</div>
<div id="t101" style="position:absolute;top:574.84px;font-size:12px;line-height:12px;font-weight:400;white-space:pre;letter-spacing:-0.153px;right:1028.60px;color:#172b4d">3d 20h 24m 0s</div>
<div id="t102" style="position:absolute;top:574.84px;font-size:12px;line-height:12px;font-weight:400;white-space:pre;letter-spacing:-0.154px;right:884.67px;color:#172b4d">76d 20h 18m 4s</div>
<div id="t103" style="position:absolute;top:574.84px;font-size:12px;line-height:12px;font-weight:400;white-space:pre;letter-spacing:0.000px;right:740.22px;color:#172b4d">-</div>
<div id="t104" style="position:absolute;top:574.84px;font-size:12px;line-height:12px;font-weight:400;white-space:pre;letter-spacing:0.000px;right:596.22px;color:#172b4d">-</div>
<div id="t105" style="position:absolute;top:574.84px;font-size:12px;line-height:12px;font-weight:400;white-space:pre;letter-spacing:0.000px;right:452.22px;color:#172b4d">-</div>
<div id="t106" style="position:absolute;top:574.84px;font-size:12px;line-height:12px;font-weight:400;white-space:pre;letter-spacing:0.000px;right:308.22px;color:#172b4d">-</div>
<div id="t107" style="position:absolute;top:574.84px;font-size:12px;line-height:12px;font-weight:400;white-space:pre;letter-spacing:0.000px;right:164.22px;color:#172b4d">-</div>
<div id="t108" style="position:absolute;top:574.84px;font-size:12px;line-height:12px;font-weight:400;white-space:pre;letter-spacing:0.000px;right:20.22px;color:#172b4d">-</div>
<div id="t109" style="position:absolute;top:641.84px;font-size:12px;line-height:12px;font-weight:700;white-space:pre;letter-spacing:0.045px;left:17.71px;color:#3572b0">MSP-18</div>
<div id="t110" style="position:absolute;top:641.84px;font-size:12px;line-height:12px;font-weight:400;white-space:pre;letter-spacing:-0.214px;left:138.21px;color:#172b4d">As a user, I'd like a</div>
<div id="t111" style="position:absolute;top:658.98px;font-size:12px;line-height:12px;font-weight:400;white-space:pre;letter-spacing:0.075px;left:137.51px;color:#172b4d">historical story to</div>
<div id="t112" style="position:absolute;top:676.12px;font-size:12px;line-height:12px;font-weight:400;white-space:pre;letter-spacing:0.024px;left:138.06px;color:#172b4d">show in reports</div>
<div id="t113" style="position:absolute;top:641.84px;font-size:12px;line-height:12px;font-weight:400;white-space:pre;letter-spacing:0.000px;right:1172.22px;color:#172b4d">-</div>
<div id="t114" style="position:absolute;top:641.84px;font-size:12px;line-height:12px;font-weight:400;white-space:pre;letter-spacing:-0.153px;right:1028.60px;color:#172b4d">0d 20h 30m 0s</div>
<div id="t115" style="position:absolute;top:641.84px;font-size:12px;line-height:12px;font-weight:400;white-space:pre;letter-spacing:-0.154px;right:884.67px;color:#172b4d">79d 20h 12m 4s</div>
<div id="t116" style="position:absolute;top:641.84px;font-size:12px;line-height:12px;font-weight:400;white-space:pre;letter-spacing:0.000px;right:740.22px;color:#172b4d">-</div>
<div id="t117" style="position:absolute;top:641.84px;font-size:12px;line-height:12px;font-weight:400;white-space:pre;letter-spacing:0.000px;right:596.22px;color:#172b4d">-</div>
<div id="t118" style="position:absolute;top:641.84px;font-size:12px;line-height:12px;font-weight:400;white-space:pre;letter-spacing:0.000px;right:452.22px;color:#172b4d">-</div>
<div id="t119" style="position:absolute;top:641.84px;font-size:12px;line-height:12px;font-weight:400;white-space:pre;letter-spacing:0.000px;right:308.22px;color:#172b4d">-</div>
<div id="t120" style="position:absolute;top:641.84px;font-size:12px;line-height:12px;font-weight:400;white-space:pre;letter-spacing:0.000px;right:164.22px;color:#172b4d">-</div>
<div id="t121" style="position:absolute;top:641.84px;font-size:12px;line-height:12px;font-weight:400;white-space:pre;letter-spacing:0.000px;right:20.22px;color:#172b4d">-</div>
<div id="t122" style="position:absolute;top:707.84px;font-size:12px;line-height:12px;font-weight:700;white-space:pre;letter-spacing:0.174px;left:17.71px;color:#3572b0">MSP-17</div>
<div id="t123" style="position:absolute;top:707.84px;font-size:12px;line-height:12px;font-weight:400;white-space:pre;letter-spacing:0.078px;left:137.37px;color:#172b4d">Instructions for</div>
<div id="t124" style="position:absolute;top:724.98px;font-size:12px;line-height:12px;font-weight:400;white-space:pre;letter-spacing:0.006px;left:138.06px;color:#172b4d">deleting this sample</div>
<div id="t125" style="position:absolute;top:742.12px;font-size:12px;line-height:12px;font-weight:400;white-space:pre;letter-spacing:0.083px;left:137.52px;color:#172b4d">board and project</div>
<div id="t126" style="position:absolute;top:759.26px;font-size:12px;line-height:12px;font-weight:400;white-space:pre;letter-spacing:0.011px;left:138.07px;color:#172b4d">are in the</div>
<div id="t127" style="position:absolute;top:707.84px;font-size:12px;line-height:12px;font-weight:400;white-space:pre;letter-spacing:0.000px;right:1172.22px;color:#172b4d">-</div>
<div id="t128" style="position:absolute;top:707.84px;font-size:12px;line-height:12px;font-weight:400;white-space:pre;letter-spacing:0.000px;right:1028.22px;color:#172b4d">-</div>
<div id="t129" style="position:absolute;top:707.84px;font-size:12px;line-height:12px;font-weight:400;white-space:pre;letter-spacing:0.000px;right:884.22px;color:#172b4d">-</div>
<div id="t130" style="position:absolute;top:707.84px;font-size:12px;line-height:12px;font-weight:400;white-space:pre;letter-spacing:0.000px;right:740.22px;color:#172b4d">-</div>
<div id="t131" style="position:absolute;top:707.84px;font-size:12px;line-height:12px;font-weight:400;white-space:pre;letter-spacing:0.000px;right:596.22px;color:#172b4d">-</div>
<div id="t132" style="position:absolute;top:707.84px;font-size:12px;line-height:12px;font-weight:400;white-space:pre;letter-spacing:0.000px;right:452.22px;color:#172b4d">-</div>
<div id="t133" style="position:absolute;top:707.84px;font-size:12px;line-height:12px;font-weight:400;white-space:pre;letter-spacing:-0.153px;right:308.60px;color:#172b4d">0d 10h 44m 0s</div>
<div id="t134" style="position:absolute;top:707.84px;font-size:12px;line-height:12px;font-weight:400;white-space:pre;letter-spacing:-0.154px;right:164.67px;color:#172b4d">62d 22h 56m 4s</div>
<div id="t135" style="position:absolute;top:707.84px;font-size:12px;line-height:12px;font-weight:400;white-space:pre;letter-spacing:-0.151px;right:20.60px;color:#172b4d">3d 5h 52m 0s</div>
</body></html>
